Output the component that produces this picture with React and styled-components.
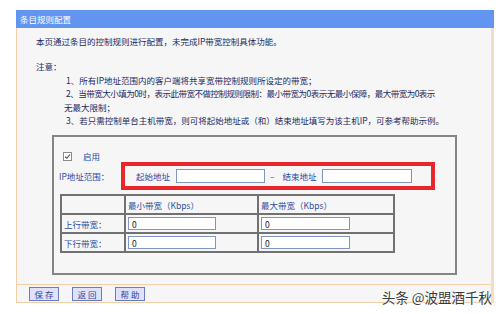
import React from 'react';
import styled, { createGlobalStyle } from 'styled-components';

const GlobalStyle = createGlobalStyle`
  html, body {
    margin: 0;
    padding: 0;
    background: #fff;
  }
  body {
    font-family: "Noto Sans CJK SC", "Liberation Sans", sans-serif;
  }
`;

const Page = styled.div`
  position: relative;
  width: 500px;
  height: 314px;
  overflow: hidden;
  padding: 10px 0 0 16px;
  box-sizing: border-box;
`;

const Panel = styled.div`
  width: 478px;
  box-sizing: border-box;
  background: #f6f6f6;
  border: 1px solid #f2cfa6;
  border-top: none;
  border-right: 3px solid #f7dcc1;
  display: flex;
  flex-direction: column;
  font-size: 8.5px;
  color: #1e2a5c;
`;

const Header = styled.div`
  height: 18px;
  line-height: 18px;
  background: #6195ef;
  color: #fff;
  padding-left: 4px;
  margin: 0 -3px 0 -1px;
`;

const Body = styled.div`
  padding: 7px 0 9px 19px;
`;

const Line = styled.div`
  line-height: 13.5px;
  white-space: nowrap;
  padding-left: ${(p) => p.$indent || 0}px;
  margin-top: ${(p) => p.$gap || 0}px;
  letter-spacing: ${(p) => p.$tight || 0}px;
`;

const Fieldset = styled.div`
  margin: 7.5px 0 0 16px;
  width: 405px;
  box-sizing: border-box;
  border: 2px solid #858585;
  padding: 0 0 20px 5px;
`;

const EnableRow = styled.label`
  display: flex;
  align-items: center;
  gap: 11px;
  height: 12px;
  margin: 13px 0 0 4px;
  color: #2b4aa6;
`;

const Check = styled.span`
  width: 9px;
  height: 9px;
  box-sizing: border-box;
  border: 1px solid #8c8c8c;
  background: #fff;
  display: flex;
  align-items: center;
  justify-content: center;
`;

const IpRow = styled.div`
  display: flex;
  align-items: center;
  height: 28px;
`;

const Label = styled.span`
  color: #2b4aa6;
  width: ${(p) => (p.$w ? `${p.$w}px` : 'auto')};
  margin: ${(p) => p.$m || '0'};
  flex-shrink: 0;
`;

const RedBox = styled.div`
  width: 314px;
  height: 28px;
  box-sizing: border-box;
  border: 4px solid #e8262b;
  display: flex;
  align-items: center;
  padding-left: 11px;
`;

const TextInput = styled.input`
  width: ${(p) => p.$w}px;
  height: ${(p) => p.$h || 14}px;
  box-sizing: border-box;
  border: 1px solid #7f96c4;
  background: #fff;
  font-family: inherit;
  font-size: 8.5px;
  color: #222;
  padding: 0 3px;
  margin: 0;
  outline: none;
  display: block;
`;

const Dash = styled.span`
  color: #2b4aa6;
  margin: 0 8px 0 5px;
`;

const Table = styled.table`
  margin: 4px 0 0 1px;
  border-collapse: collapse;
  width: 333px;
  table-layout: fixed;
  td {
    border: 2px solid #717171;
    height: 17px;
    padding: 0 0 0 2px;
    color: #2e4f9f;
    white-space: nowrap;
    vertical-align: middle;
  }
`;

const Footer = styled.div`
  border-top: 1px solid #f2cfa6;
  height: 17px;
  display: flex;
  align-items: center;
  gap: 13px;
  padding-left: 12px;
`;

const Button = styled.button`
  width: 30px;
  height: 14px;
  padding: 0;
  box-sizing: border-box;
  border: 1px solid #6c7cc4;
  background: #dfe2f8;
  color: #33449a;
  font-family: inherit;
  font-size: 8.5px;
  letter-spacing: 2px;
  text-indent: 2px;
  line-height: 12px;
`;

const Watermark = styled.div`
  position: absolute;
  right: 8px;
  top: 289px;
  font-size: 13.5px;
  line-height: 17px;
  color: #3a3a3a;
  text-shadow: 0 0 2px #fff, 0 0 2px #fff;
  white-space: nowrap;
`;

export default function App() {
  return (
    <Page>
      <GlobalStyle />
      <Panel>
        <Header>条目规则配置</Header>
        <Body>
          <Line>本页通过条目的控制规则进行配置，未完成IP带宽控制具体功能。</Line>
          <Line $gap={11.5}>注意：</Line>
          <Line $indent={30}>1、所有IP地址范围内的客户端将共享宽带控制规则所设定的带宽；</Line>
          <Line $indent={30} $tight={-0.5}>
            2、当带宽大小填为0时，表示此带宽不做控制规则限制：最小带宽为0表示无最小保障，最大带宽为0表示
          </Line>
          <Line $indent={28}>无最大限制；</Line>
          <Line $indent={30}>
            3、若只需控制单台主机带宽，则可将起始地址或（和）结束地址填写为该主机IP，可参考帮助示例。
          </Line>

          <Fieldset>
            <EnableRow>
              <Check>
                <svg width="7" height="7" viewBox="0 0 7 7">
                  <path d="M1 3.6 L2.8 5.3 L6 1.5" fill="none" stroke="#444" strokeWidth="1.1" />
                </svg>
              </Check>
              启用
            </EnableRow>
            <IpRow>
              <Label $w={62}>IP地址范围：</Label>
              <RedBox>
                <Label $m="0 6px 0 0">起始地址</Label>
                <TextInput $w={89} readOnly value="" />
                <Dash>–</Dash>
                <Label $m="0 5px 0 0">结束地址</Label>
                <TextInput $w={90} readOnly value="" />
              </RedBox>
            </IpRow>
            <Table>
              <colgroup>
                <col style={{ width: 64 }} />
                <col style={{ width: 133 }} />
                <col style={{ width: 136 }} />
              </colgroup>
              <tbody>
                <tr>
                  <td></td>
                  <td>最小带宽（Kbps）</td>
                  <td>最大带宽（Kbps）</td>
                </tr>
                <tr>
                  <td>上行带宽：</td>
                  <td><TextInput $w={88} $h={13} readOnly value="0" /></td>
                  <td><TextInput $w={89} $h={13} readOnly value="0" /></td>
                </tr>
                <tr>
                  <td>下行带宽：</td>
                  <td><TextInput $w={88} $h={13} readOnly value="0" /></td>
                  <td><TextInput $w={89} $h={13} readOnly value="0" /></td>
                </tr>
              </tbody>
            </Table>
          </Fieldset>
        </Body>
        <Footer>
          <Button>保存</Button>
          <Button>返回</Button>
          <Button>帮助</Button>
        </Footer>
      </Panel>
      <Watermark>头条 @波盟酒千秋</Watermark>
    </Page>
  );
}
